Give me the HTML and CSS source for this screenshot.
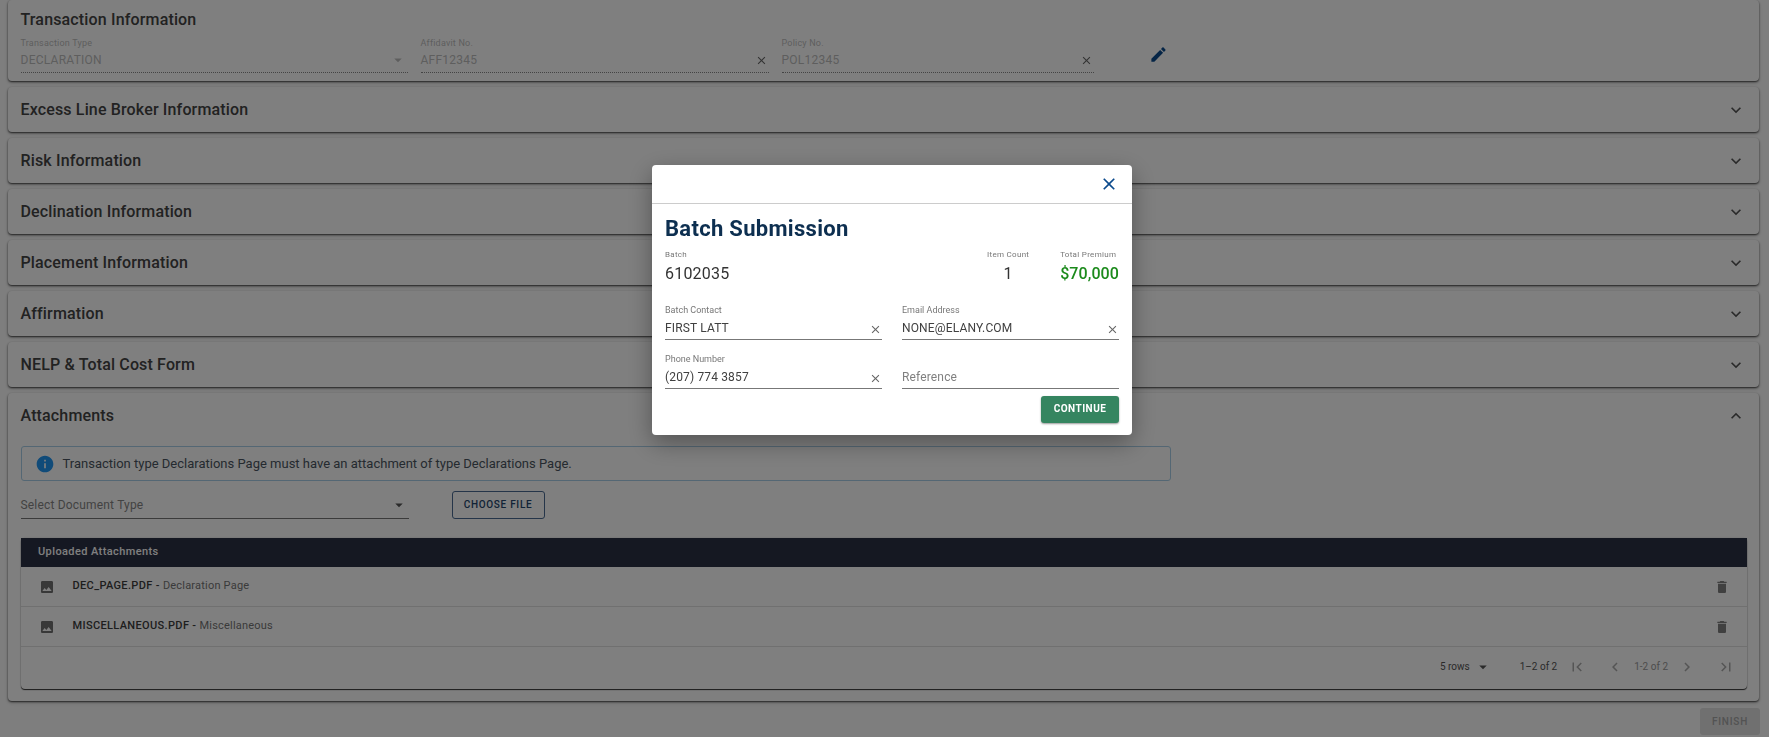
FILE: index.html
```html
<!DOCTYPE html>
<html lang="en">
<head>
  <meta charset="UTF-8" />
  <title>Transaction</title>
  <link rel="stylesheet" href="styles.css">
</head>
<body>
  <svg class="defs" width="0" height="0">
    <symbol id="i-close" viewBox="0 0 24 24"><path d="M19 6.41L17.59 5 12 10.59 6.41 5 5 6.41 10.59 12 5 17.59 6.41 19 12 13.41 17.59 19 19 17.59 13.41 12z"/></symbol>
    <symbol id="i-more" viewBox="0 0 24 24"><path d="M16.59 8.59L12 13.17 7.41 8.59 6 10l6 6 6-6z"/></symbol>
    <symbol id="i-less" viewBox="0 0 24 24"><path d="M12 8l-6 6 1.41 1.41L12 10.83l4.59 4.58L18 14z"/></symbol>
    <symbol id="i-edit" viewBox="0 0 24 24"><path d="M3 17.25V21h3.75L17.81 9.94l-3.75-3.75L3 17.25zM20.71 7.04c.39-.39.39-1.02 0-1.41l-2.34-2.34c-.39-.39-1.02-.39-1.41 0l-1.83 1.83 3.75 3.75 1.83-1.83z"/></symbol>
    <symbol id="i-info" viewBox="0 0 24 24"><path d="M12 2C6.48 2 2 6.48 2 12s4.48 10 10 10 10-4.48 10-10S17.52 2 12 2zm1 15h-2v-6h2v6zm0-8h-2V7h2v2z"/></symbol>
    <symbol id="i-image" viewBox="0 0 24 24"><path d="M21 19V5c0-1.1-.9-2-2-2H5c-1.1 0-2 .9-2 2v14c0 1.1.9 2 2 2h14c1.1 0 2-.9 2-2zM8.5 13.5l2.5 3.01L14.5 12l4.5 6H5l3.5-4.5z"/></symbol>
    <symbol id="i-delete" viewBox="0 0 24 24"><path d="M6 19c0 1.1.9 2 2 2h8c1.1 0 2-.9 2-2V7H6v12zM19 4h-3.5l-1-1h-5l-1 1H5v2h14V4z"/></symbol>
    <symbol id="i-first" viewBox="0 0 24 24"><path d="M18.41 16.59L13.82 12l4.59-4.59L17 6l-6 6 6 6zM6 6h2v12H6z"/></symbol>
    <symbol id="i-last" viewBox="0 0 24 24"><path d="M5.59 7.41L10.18 12 5.59 16.59 7 18l6-6-6-6zM16 6h2v12h-2z"/></symbol>
    <symbol id="i-prev" viewBox="0 0 24 24"><path d="M15.41 7.41L14 6l-6 6 6 6 1.41-1.41L10.83 12z"/></symbol>
    <symbol id="i-next" viewBox="0 0 24 24"><path d="M10 6L8.59 7.41 13.17 12l-4.58 4.59L10 18l6-6z"/></symbol>
    <symbol id="i-drop" viewBox="0 0 24 24"><path d="M7 10l5 5 5-5z"/></symbol>
  </svg>

  <div class="page">
    <section class="card card-open">
      <h2 class="card-title">Transaction Information</h2>
      <div class="locked-row">
        <div class="locked-field w-type">
          <span class="small-label">Transaction Type</span>
          <div class="locked-value">DECLARATION <svg class="drop-icon"><use href="#i-drop"/></svg></div>
        </div>
        <div class="locked-field w-aff">
          <span class="small-label">Affidavit No.</span>
          <div class="locked-value">AFF12345 <svg class="clear-icon"><use href="#i-close"/></svg></div>
        </div>
        <div class="locked-field w-pol">
          <span class="small-label">Policy No.</span>
          <div class="locked-value">POL12345 <svg class="clear-icon"><use href="#i-close"/></svg></div>
        </div>
        <svg class="edit-icon"><use href="#i-edit"/></svg>
      </div>
    </section>

    <section class="card card-closed"><h2 class="card-title">Excess Line Broker Information</h2><svg class="chevron"><use href="#i-more"/></svg></section>
    <section class="card card-closed"><h2 class="card-title">Risk Information</h2><svg class="chevron"><use href="#i-more"/></svg></section>
    <section class="card card-closed"><h2 class="card-title">Declination Information</h2><svg class="chevron"><use href="#i-more"/></svg></section>
    <section class="card card-closed"><h2 class="card-title">Placement Information</h2><svg class="chevron"><use href="#i-more"/></svg></section>
    <section class="card card-closed"><h2 class="card-title">Affirmation</h2><svg class="chevron"><use href="#i-more"/></svg></section>
    <section class="card card-closed"><h2 class="card-title">NELP &amp; Total Cost Form</h2><svg class="chevron"><use href="#i-more"/></svg></section>

    <section class="card card-attach">
      <div class="attach-head">
        <h2 class="card-title">Attachments</h2>
        <svg class="chevron"><use href="#i-less"/></svg>
      </div>
      <div class="alert">
        <svg class="alert-icon"><use href="#i-info"/></svg>
        <span>Transaction type Declarations Page must have an attachment of type Declarations Page.</span>
      </div>
      <div class="upload-row">
        <div class="doc-select">Select Document Type <svg class="drop-icon dark"><use href="#i-drop"/></svg></div>
        <button class="choose-btn">CHOOSE FILE</button>
      </div>
      <div class="table">
        <div class="table-head">Uploaded Attachments</div>
        <div class="table-row">
          <svg class="file-icon"><use href="#i-image"/></svg>
          <span class="file-name">DEC_PAGE.PDF - <span class="file-type">Declaration Page</span></span>
          <svg class="trash-icon"><use href="#i-delete"/></svg>
        </div>
        <div class="table-row">
          <svg class="file-icon"><use href="#i-image"/></svg>
          <span class="file-name">MISCELLANEOUS.PDF - <span class="file-type">Miscellaneous</span></span>
          <svg class="trash-icon"><use href="#i-delete"/></svg>
        </div>
        <div class="table-foot">
          <span class="rows-select">5 rows <svg class="drop-icon dark"><use href="#i-drop"/></svg></span>
          <span class="count">1–2 of 2</span>
          <svg class="page-icon first"><use href="#i-first"/></svg>
          <svg class="page-icon prev"><use href="#i-prev"/></svg>
          <span class="count-muted">1-2 of 2</span>
          <svg class="page-icon next"><use href="#i-next"/></svg>
          <svg class="page-icon last"><use href="#i-last"/></svg>
        </div>
      </div>
    </section>

    <div class="actions"><button class="finish-btn">FINISH</button></div>
  </div>

  <div class="overlay"></div>

  <div class="modal">
    <div class="modal-top"><svg class="modal-close"><use href="#i-close"/></svg></div>
    <div class="modal-body">
      <h1 class="modal-title">Batch Submission</h1>
      <div class="stats">
        <div class="stat stat-batch"><span class="small-label">Batch</span><span class="stat-value">6102035</span></div>
        <div class="stat stat-count"><span class="small-label">Item Count</span><span class="stat-value">1</span></div>
        <div class="stat stat-premium"><span class="small-label">Total Premium</span><span class="stat-value money">$70,000</span></div>
      </div>
      <div class="form-grid">
        <div class="field">
          <span class="small-label">Batch Contact</span>
          <div class="field-value">FIRST LATT <svg class="clear-icon"><use href="#i-close"/></svg></div>
        </div>
        <div class="field">
          <span class="small-label">Email Address</span>
          <div class="field-value">NONE@ELANY.COM <svg class="clear-icon"><use href="#i-close"/></svg></div>
        </div>
        <div class="field">
          <span class="small-label">Phone Number</span>
          <div class="field-value">(207) 774 3857 <svg class="clear-icon"><use href="#i-close"/></svg></div>
        </div>
        <div class="field">
          <span class="small-label">&nbsp;</span>
          <div class="field-value placeholder">Reference</div>
        </div>
      </div>
      <div class="modal-actions"><button class="continue-btn">CONTINUE</button></div>
    </div>
  </div>
</body>
</html>
```

FILE: styles.css
```css
html, body {
  height: 100%;
  margin: 0;
  padding: 0;
}

body {
  font-family: Roboto, sans-serif;
  background-color: #fdfdfd;
  color: #333;
  overflow: hidden;
}

svg {
  fill: currentColor;
  flex: none;
}

.defs {
  position: absolute;
}

.page {
  padding: 0 10px 0 8px;
}

.card {
  background: #fff;
  border-radius: 4px;
  box-shadow: 0 1px 2px rgba(0, 0, 0, 0.7), 0 2px 4px rgba(0, 0, 0, 0.15);
  margin-bottom: 6px;
  padding: 0 12px 0 12.5px;
}

.card-title {
  margin: 0;
  font-size: 16px;
  font-weight: 500;
  letter-spacing: 0.15px;
  color: #444;
}

.card-closed {
  height: 45px;
  display: flex;
  align-items: center;
  justify-content: space-between;
  box-sizing: border-box;
}

.chevron {
  width: 20px;
  height: 20px;
  margin-right: 1px;
  color: #555;
}

.card-open {
  height: 81px;
  padding-top: 10px;
  box-sizing: border-box;
}

.card-open .card-title {
  line-height: 19px;
}

.small-label {
  display: block;
  font-size: 9px;
  line-height: 11px;
  letter-spacing: 0.2px;
  color: #777;
}

.locked-row {
  display: flex;
  margin-top: 9px;
}

.locked-field {
  margin-right: 13px;
}

.locked-field .small-label {
  color: #bdbdbd;
}

.w-type { width: 387px; }
.w-aff { width: 348px; }
.w-pol { width: 312px; }

.locked-value {
  display: flex;
  align-items: center;
  justify-content: space-between;
  height: 24px;
  padding-bottom: 2px;
  font-size: 12px;
  letter-spacing: 0.25px;
  color: #bdbdbd;
  border-bottom: 1px dotted #888;
  box-sizing: border-box;
}

.drop-icon {
  width: 18px;
  height: 18px;
  color: #bdbdbd;
  margin-right: 1px;
}

.drop-icon.dark {
  color: #555;
}

.clear-icon {
  width: 13px;
  height: 13px;
  color: #666;
  margin-top: 2px;
  margin-right: 1px;
}

.edit-icon {
  width: 19px;
  height: 19px;
  color: #0b4a8c;
  margin: 7px 0 0 42px;
}

.attach-head {
  height: 45px;
  display: flex;
  align-items: center;
  justify-content: space-between;
  box-sizing: border-box;
}

.card-attach {
  padding-bottom: 12px;
  margin-bottom: 7px;
}

.alert {
  margin-top: 8px;
  width: 1150px;
  height: 35px;
  box-sizing: border-box;
  border: 1px solid #a9cfe8;
  border-radius: 3px;
  display: flex;
  align-items: center;
  padding-left: 13px;
  font-size: 13px;
  color: #4a5560;
}

.alert-icon {
  width: 20px;
  height: 20px;
  color: #2196f3;
  margin-right: 8px;
}

.upload-row {
  display: flex;
  margin-top: 10px;
  margin-bottom: 19px;
}

.doc-select {
  width: 388px;
  height: 28px;
  box-sizing: border-box;
  border-bottom: 1px solid #777;
  display: flex;
  align-items: center;
  justify-content: space-between;
  font-size: 12px;
  letter-spacing: 0.18px;
  color: #858585;
}

.choose-btn {
  margin-left: 43px;
  width: 93px;
  height: 28px;
  padding: 0 0 1px;
  font-family: inherit;
  font-size: 10px;
  font-weight: 500;
  letter-spacing: 0.7px;
  background: transparent;
  color: #24466e;
  border: 1px solid #4a6a92;
  border-radius: 3px;
}

.table {
  border-radius: 4px;
  box-shadow: 0 1px 1px rgba(0, 0, 0, 0.8), 0 0 2px rgba(0, 0, 0, 0.2);
}

.table-head {
  height: 29px;
  line-height: 28px;
  padding-left: 17.5px;
  background: #2b3145;
  color: #fff;
  font-size: 11px;
  font-weight: 500;
  letter-spacing: 0.4px;
}

.table-row {
  height: 40px;
  display: flex;
  align-items: center;
  border-bottom: 1px solid #e0e0e0;
  box-sizing: border-box;
  padding-left: 18px;
  padding-right: 17px;
}

.file-icon {
  width: 16px;
  height: 16px;
  margin-right: 18px;
  margin-top: 1px;
  color: #707070;
}

.file-name {
  flex: 1;
  font-size: 11px;
  font-weight: 500;
  color: #3d3d3d;
  letter-spacing: 0.35px;
  padding-bottom: 2px;
}

.file-type {
  font-weight: 400;
  color: #757575;
  letter-spacing: 0.2px;
}

.trash-icon {
  width: 16px;
  height: 16px;
  color: #808080;
}

.table-foot {
  height: 42px;
  display: flex;
  align-items: center;
  font-size: 10px;
  color: #555;
  box-sizing: border-box;
  padding-bottom: 3px;
}

.rows-select {
  margin-left: auto;
  display: flex;
  align-items: center;
  gap: 4px;
}

.count {
  margin-left: 27px;
  font-size: 10px;
}

.count-muted {
  font-size: 10px;
  color: #999;
  margin: 0 10px;
}

.page-icon {
  width: 18px;
  height: 18px;
  color: #aaa;
}

.page-icon.first { margin-left: 11px; }
.page-icon.prev { margin-left: 20px; }
.page-icon.last { margin-left: 21px; margin-right: 12px; }

.actions {
  display: flex;
  justify-content: flex-end;
  margin-right: -1px;
}

.finish-btn {
  width: 60px;
  height: 27px;
  padding: 0;
  font-family: inherit;
  font-size: 10px;
  font-weight: 500;
  letter-spacing: 0.8px;
  color: #a6a6a6;
  background: #e0e0e0;
  border: 0;
  border-radius: 3px;
}

.overlay {
  position: fixed;
  inset: 0;
  background: rgba(0, 0, 0, 0.5);
}

.modal {
  position: fixed;
  left: 652px;
  top: 165px;
  width: 480px;
  height: 270px;
  background: #fff;
  border-radius: 4px;
  box-shadow: 0 8px 24px rgba(0, 0, 0, 0.35);
}

.modal-top {
  height: 39px;
  display: flex;
  align-items: center;
  justify-content: flex-end;
  padding-right: 13px;
  border-bottom: 1px solid #ccc;
  box-sizing: border-box;
}

.modal-close {
  width: 20px;
  height: 20px;
  color: #0b4a8c;
}

.modal-body {
  padding: 12px 13px 0;
}

.modal-title {
  margin: 0;
  font-size: 22px;
  line-height: 26px;
  font-weight: 700;
  letter-spacing: 0.3px;
  color: #0d2f50;
}

.stats {
  display: flex;
  margin-top: 7px;
}

.stat-batch {
  flex: 1;
}

.stat-count {
  text-align: center;
  width: 60px;
  margin-right: 22px;
}

.stat .small-label {
  line-height: 11px;
  font-size: 8px;
  letter-spacing: 0.3px;
}

.stat-value {
  display: block;
  font-size: 16px;
  line-height: 24px;
  padding-top: 2px;
  letter-spacing: 0.2px;
  color: #333;
}

.stat-value.money {
  color: #1b8a1b;
  font-weight: 500;
  letter-spacing: 0.1px;
}

.form-grid {
  display: grid;
  grid-template-columns: 217px 217px;
  column-gap: 20px;
  row-gap: 14px;
  margin-top: 19px;
}

.field .small-label {
  font-size: 9px;
  line-height: 11px;
  letter-spacing: 0;
  color: #777;
}

.field-value {
  height: 24px;
  display: flex;
  align-items: center;
  justify-content: space-between;
  box-sizing: border-box;
  border-bottom: 1px solid #777;
  font-size: 12px;
  letter-spacing: 0.15px;
  color: #404040;
}

.field-value .clear-icon {
  margin-right: 0;
  margin-top: 3px;
}

.field-value.placeholder {
  color: #808080;
}

.modal-actions {
  display: flex;
  justify-content: flex-end;
  margin-top: 7px;
}

.continue-btn {
  width: 78px;
  height: 27px;
  padding: 0 0 2px;
  font-family: inherit;
  font-size: 10px;
  font-weight: 700;
  letter-spacing: 0.5px;
  color: #fff;
  background: #358560;
  border: 0;
  border-radius: 3px;
  box-shadow: 0 1px 2px rgba(0, 0, 0, 0.4);
}
```
